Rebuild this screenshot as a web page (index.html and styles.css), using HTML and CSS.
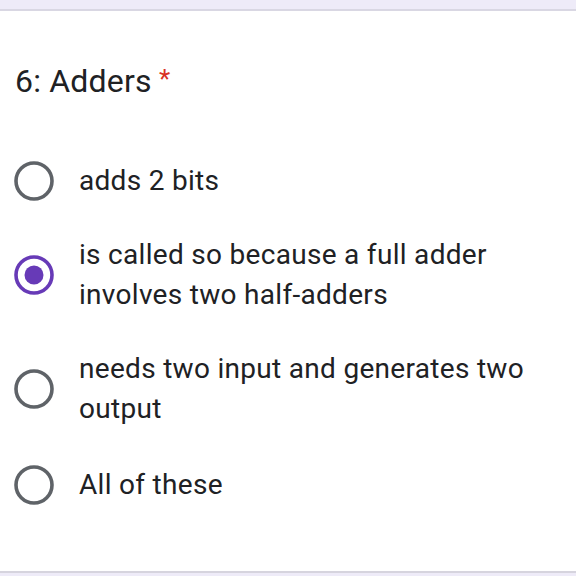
FILE: index.html
```html
<!DOCTYPE html>
<html>
<head>
<meta charset="utf-8">
<link rel="stylesheet" href="styles.css">
</head>
<body>
<div class="band-top"></div>
<div class="card">
  <div class="title">6: Adders <span class="req">*</span></div>
  <div class="options">
    <div class="option">
      <svg class="radio" viewBox="0 0 40 40"><circle cx="20" cy="20" r="18" fill="none" stroke="#5f6368" stroke-width="3.6"/></svg>
      <div class="label">adds 2 bits</div>
    </div>
    <div class="option">
      <svg class="radio" viewBox="0 0 40 40"><circle cx="20" cy="20" r="18" fill="none" stroke="#673ab7" stroke-width="3.6"/><circle cx="20" cy="20" r="9.5" fill="#673ab7"/></svg>
      <div class="label">is called so because a full adder involves two half-adders</div>
    </div>
    <div class="option">
      <svg class="radio" viewBox="0 0 40 40"><circle cx="20" cy="20" r="18" fill="none" stroke="#5f6368" stroke-width="3.6"/></svg>
      <div class="label">needs two input and generates two output</div>
    </div>
    <div class="option last">
      <svg class="radio" viewBox="0 0 40 40"><circle cx="20" cy="20" r="18" fill="none" stroke="#5f6368" stroke-width="3.6"/></svg>
      <div class="label">All of these</div>
    </div>
  </div>
</div>
<div class="band-bottom"></div>
</body>
</html>
```

FILE: styles.css
```css
html, body {
  margin: 0;
  padding: 0;
  background: #ffffff;
}
body {
  width: 576px;
  height: 576px;
  overflow: hidden;
  font-family: Roboto, "Liberation Sans", sans-serif;
  color: #202124;
  display: flex;
  flex-direction: column;
}
.band-top {
  height: 9px;
  background: #eeebf8;
  border-bottom: 2px solid #d9d7e3;
  flex: none;
}
.card {
  flex: 1;
  padding: 48px 0 0 15px;
}
.title {
  font-size: 32px;
  line-height: 40px;
  font-weight: 400;
  letter-spacing: 0.2px;
}
.req {
  color: #d93025;
  font-size: 26px;
  vertical-align: 4px;
  margin-left: -1px;
}
.options {
  margin-top: 60px;
  display: flex;
  flex-direction: column;
  gap: 34px;
}
.option {
  display: flex;
  align-items: center;
}
.option.last {
  margin-top: 2px;
}
.radio {
  width: 40px;
  height: 40px;
  flex: none;
  margin-left: -1px;
}
.label {
  margin-left: 25px;
  font-size: 28px;
  line-height: 40px;
  letter-spacing: 0.3px;
  width: 470px;
}
.band-bottom {
  height: 3px;
  background: #eeebf8;
  border-top: 2px solid #d6d4de;
  flex: none;
}
```
